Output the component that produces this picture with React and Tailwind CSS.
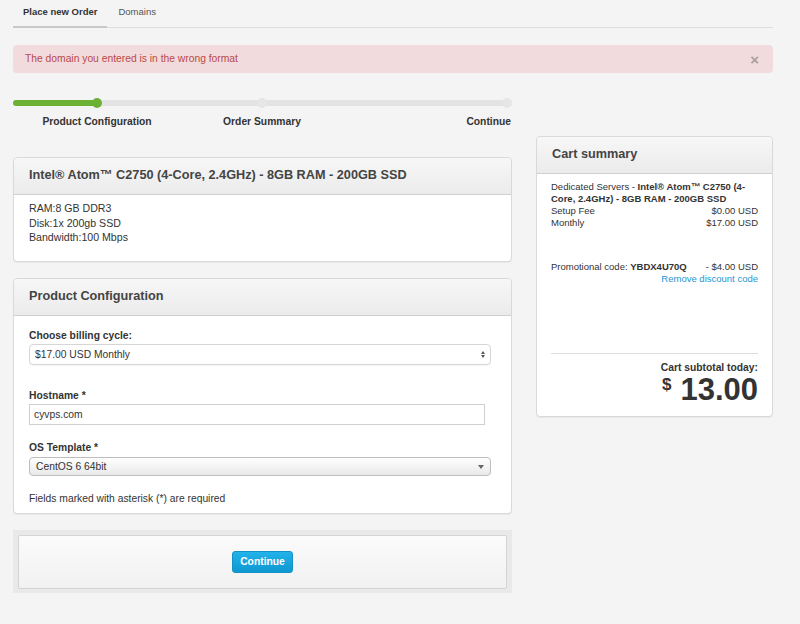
const font = { fontFamily: '"Liberation Sans", Arial, sans-serif' };

function Panel({ title, children, className = '' }) {
    return (
        <div className={`rounded-[4px] border border-[#d9d9d9] bg-white shadow-[0_1px_1px_rgba(0,0,0,0.05)] ${className}`}>
            <div className="flex h-[37px] items-center rounded-t-[4px] border-b border-[#cfcfcf] bg-gradient-to-b from-[#f7f7f7] to-[#ebebeb] px-[15px]">
                <h3 className="text-[12.7px] font-bold text-[#444]">{title}</h3>
            </div>
            {children}
        </div>
    );
}

function Progress() {
    return (
        <div className="pt-[8px]">
            <div className="relative h-[10px]">
                <div className="absolute left-0 right-[4px] top-[2px] h-[6px] rounded-full bg-[#e3e3e3]" />
                <div className="absolute left-0 top-[2px] h-[6px] w-[84px] rounded-full bg-[#6bb234]" />
                <div className="absolute left-[79px] top-0 h-[10px] w-[10px] rounded-full bg-[#6bb234]" />
                <div className="absolute left-[244px] top-0 h-[10px] w-[10px] rounded-full bg-[#e6e6e6]" />
                <div className="absolute right-0 top-0 h-[10px] w-[10px] rounded-full bg-[#e6e6e6]" />
            </div>
            <div className="mt-[7px] flex text-[10.3px] font-bold leading-[14px] text-[#333]">
                <div className="w-[168px] text-center">Product Configuration</div>
                <div className="w-[162px] text-center">Order Summary</div>
                <div className="flex-1 pr-[1px] text-right">Continue</div>
            </div>
        </div>
    );
}

export default function App() {
    return (
        <div style={font} className="min-h-[624px] w-[800px] bg-[#f4f4f4] text-[#333]">
            <div className="w-[773px] pl-[13px]">
                <div className="flex h-[28px] items-end border-b border-[#dedede] text-[9.5px]">
                    <div className="-mb-px flex h-[28px] items-center border-b-2 border-[#c9c9c9] px-[10px] pb-[2px] font-bold text-[#333]">
                        Place new Order
                    </div>
                    <div className="flex h-[28px] items-center px-[11px] pb-[2px] text-[#555]">Domains</div>
                </div>

                <div className="mt-[17px] flex h-[28px] items-center justify-between rounded-[4px] bg-[#f2dbdc] px-[12px] text-[10.3px] text-[#b94a48]">
                    <span>The domain you entered is in the wrong format</span>
                    <span className="mr-[2px] text-[15px] font-bold leading-none text-[#a9a0a0]">×</span>
                </div>

                <div className="mt-[17px] flex gap-[24px]">
                    <div className="w-[499px]">
                        <Progress />

                        <Panel title="Intel® Atom™ C2750 (4-Core, 2.4GHz) - 8GB RAM - 200GB SSD" className="mt-[28px]">
                            <div className="h-[66px] px-[15px] pt-[6px] text-[10.6px] leading-[14.5px]">
                                <div>RAM:8 GB DDR3</div>
                                <div>Disk:1x 200gb SSD</div>
                                <div>Bandwidth:100 Mbps</div>
                            </div>
                        </Panel>

                        <Panel title="Product Configuration" className="mt-[16px]">
                            <div className="px-[15px] pb-[7px] pt-[13px] text-[10.3px] leading-[14px]">
                                <div className="font-bold">Choose billing cycle:</div>
                                <div className="mt-[1px] flex h-[21px] w-[462px] items-center justify-between rounded-[4px] border border-[#d6d6d6] bg-white pl-[5px] pr-[5px] shadow-[0_1px_1px_rgba(0,0,0,0.04)]">
                                    <span>$17.00 USD Monthly</span>
                                    <span className="flex flex-col items-center gap-[1px]">
                                        <span className="h-0 w-0 border-x-[2.5px] border-b-[3px] border-x-transparent border-b-[#555]" />
                                        <span className="h-0 w-0 border-x-[2.5px] border-t-[3px] border-x-transparent border-t-[#555]" />
                                    </span>
                                </div>

                                <div className="mt-[24px] font-bold">Hostname *</div>
                                <div className="mt-[1px] flex h-[21px] w-[456px] items-center border border-[#cfcfcf] bg-white pl-[4px]">
                                    cyvps.com
                                </div>

                                <div className="mt-[16px] font-bold">OS Template *</div>
                                <div className="mt-[2px] flex h-[19px] w-[462px] items-center justify-between rounded-[4px] border border-[#bdbdbd] bg-gradient-to-b from-[#ffffff] to-[#e9e9e9] pl-[6px] pr-[6px]">
                                    <span>CentOS 6 64bit</span>
                                    <span className="h-0 w-0 border-x-[3px] border-t-[4px] border-x-transparent border-t-[#666]" />
                                </div>

                                <div className="mt-[16px]">Fields marked with asterisk (*) are required</div>
                            </div>
                        </Panel>

                        <div className="mt-[16px] h-[63px] bg-[#e9e9e9] px-[5px] pt-[5px]">
                            <div className="flex h-[54px] items-center justify-center rounded-[2px] border border-[#d4d4d4] bg-gradient-to-b from-[#fbfbfb] to-[#f1f1f1]">
                                <button className="h-[22px] rounded-[3px] border border-[#1592c5] bg-gradient-to-b from-[#23b2ea] to-[#0d98d2] px-[7px] text-[10.3px] font-bold text-white">
                                    Continue
                                </button>
                            </div>
                        </div>
                    </div>

                    <div className="w-[237px] pt-[46px]">
                        <Panel title="Cart summary">
                            <div className="px-[14px] pb-[11px] pt-[7px] text-[9.5px] leading-[12px] text-[#333]">
                                <p>
                                    Dedicated Servers - <b>Intel® Atom™ C2750 (4-Core, 2.4GHz) - 8GB RAM - 200GB SSD</b>
                                </p>
                                <div className="flex justify-between">
                                    <span>Setup Fee</span>
                                    <span>$0.00 USD</span>
                                </div>
                                <div className="flex justify-between">
                                    <span>Monthly</span>
                                    <span>$17.00 USD</span>
                                </div>
                                <div className="mt-[32px] flex justify-between whitespace-nowrap">
                                    <span>
                                        Promotional code: <b>YBDX4U70Q</b>
                                    </span>
                                    <span>- $4.00 USD</span>
                                </div>
                                <div className="text-right text-[#1b97d5]">Remove discount code</div>

                                <div className="mt-[68px] border-t border-[#dcdcdc]" />
                                <div className="mt-[7px] text-right text-[10.3px] font-bold leading-[13px]">Cart subtotal today:</div>
                                <div className="flex items-start justify-end font-bold leading-none">
                                    <span className="mr-[9px] mt-[2px] text-[17px]">$</span>
                                    <span className="text-[31px]">13.00</span>
                                </div>
                            </div>
                        </Panel>
                    </div>
                </div>
            </div>
        </div>
    );
}
